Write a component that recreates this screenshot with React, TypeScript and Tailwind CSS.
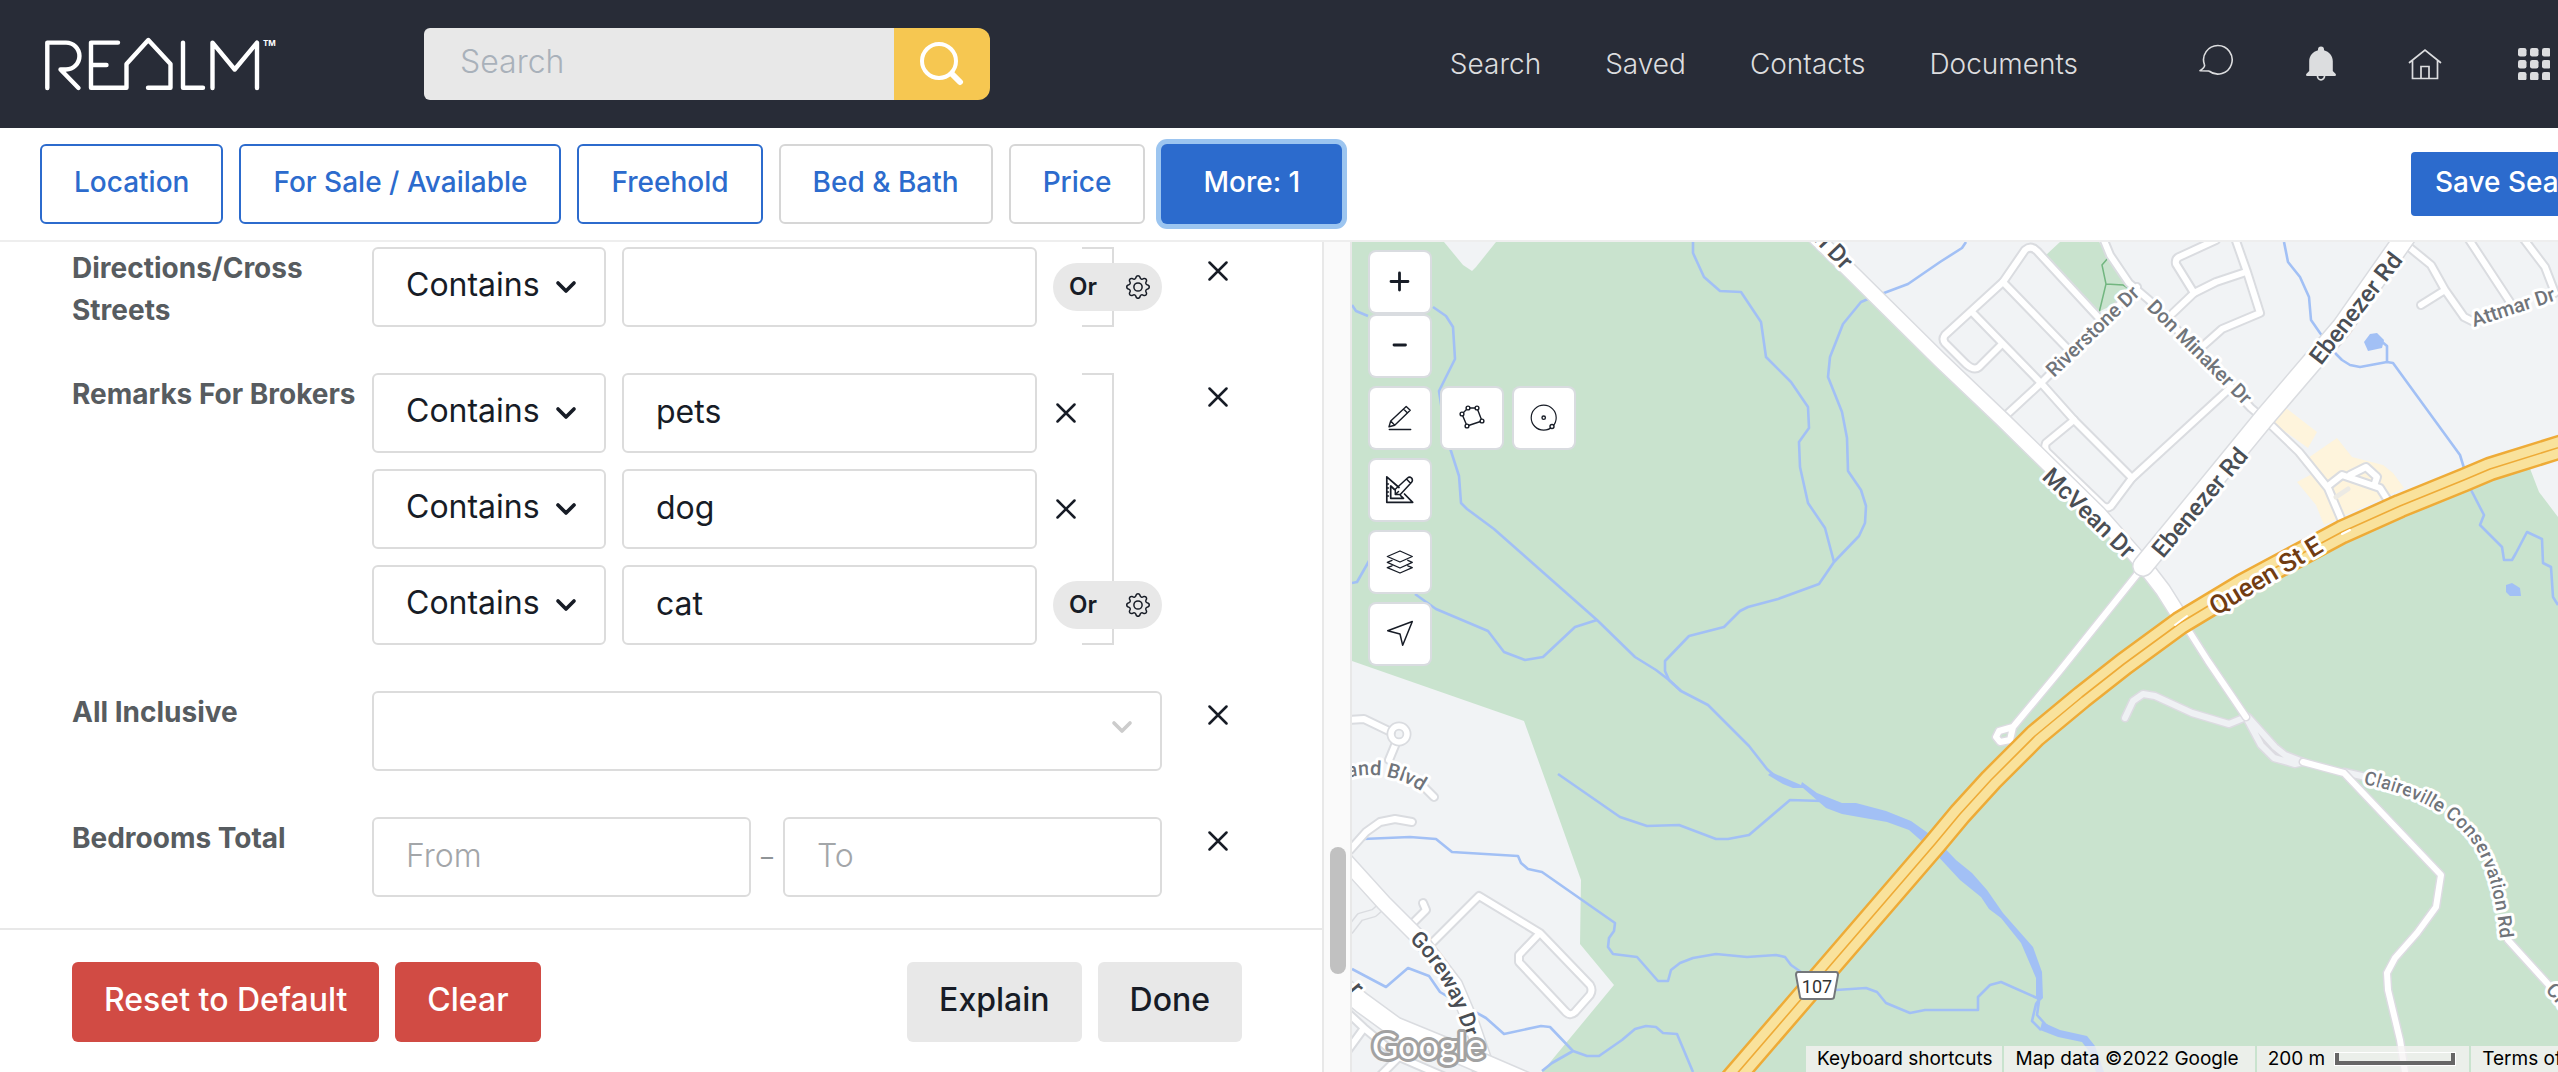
import type { ReactNode } from "react";
import { ChevronDown } from "lucide-react";
import { BsGear } from "react-icons/bs";

/* ---------- Header ---------- */

function Logo() {
  return (
    <svg viewBox="44 36 240 56" className="h-14 w-60 shrink-0" role="img" aria-label="REALM">
      <g fill="none" stroke="#fff" strokeWidth="4.4" strokeLinecap="round" strokeLinejoin="round">
        <path d="M47.3 88V42.6H66A13.4 13.4 0 0 1 66 69.5H60.5L78.5 88" />
        <path d="M118 42.6H91V87.7H126.5V64L148.3 40L170.5 64V87.7H148M91 65H106.5" />
        <path d="M183 42.6V87.7H203" />
        <path d="M212.5 88V42.6L234.7 69.5L257 42.6V88" />
      </g>
      <text x="263" y="46" fill="#fff" className="font-['Inter'] text-[8px] font-bold">
        TM
      </text>
    </svg>
  );
}

function ChatIcon() {
  return (
    <svg viewBox="0 0 36 40" className="h-10 w-9" fill="none" stroke="#dcdddf" strokeWidth="1.6" strokeLinejoin="round">
      <path d="M11 27L2 26.7Q7.5 23 6.4 20.6A14.3 14.3 0 1 1 11 27" />
    </svg>
  );
}

function BellIcon() {
  return (
    <svg viewBox="0 0 30 36" className="h-9 w-[30px]" fill="#dcdddf">
      <path d="M15 .5a3 3 0 0 1 3 3v.7c5.200 1.500 8.800 5.500 8.800 11V25l2.700 2.700c.9 1 .3 2.300-.8 2.300H1.300C.2 30-.4 28.700.5 27.700L3.200 25v-9.800c0-5.500 3.600-9.500 8.800-11v-.7a3 3 0 0 1 3-3z" />
      <path d="M11.500 30a3.500 3.800 0 0 0 7 0" fill="none" stroke="#dcdddf" strokeWidth="1.700" />
    </svg>
  );
}

function HouseIcon() {
  return (
    <svg viewBox="0 0 34 32" className="h-8 w-[34px]" fill="none" stroke="#dcdddf" strokeWidth="1.7" strokeLinecap="round">
      <path d="M1.500 14.500L17 2L32.500 14.500M4.500 12.500V30.500H29.500V12.500M13 30.500V18.500H21V30.500" />
    </svg>
  );
}

function GridIcon() {
  const steps = [0, 12, 24];
  return (
    <svg viewBox="0 0 32 32" className="size-8" fill="#dcdddf">
      {steps.map((y) => steps.map((x) => <rect key={`${x}-${y}`} x={x} y={y} width="8.500" height="8.500" rx="2.200" />))}
    </svg>
  );
}

function Header() {
  return (
    <header className="flex h-32 shrink-0 items-center bg-[#282c37] pr-2 pl-11 text-[#dcdddf]">
      <Logo />
      <form className="ml-[140px] flex h-[72px] w-[566px]" onSubmit={(e) => e.preventDefault()}>
        <input
          type="search"
          aria-label="Search"
          placeholder="Search"
          className="min-w-0 flex-1 rounded-l-md bg-[#e8e8e8] pb-1 pl-9 text-[32px] font-light text-gray-900 outline-none placeholder:text-[#a9b1ba]"
        />
        <button type="submit" aria-label="Run search" className="flex w-24 items-center justify-center rounded-r-xl bg-[#f6c751]">
          <svg viewBox="0 0 44 44" className="size-11" fill="none" stroke="#fff" strokeLinecap="round">
            <circle cx="19" cy="19" r="17" strokeWidth="4" />
            <path d="M32 32L40 40" strokeWidth="6" />
          </svg>
        </button>
      </form>
      <nav className="ml-auto flex items-center gap-16 text-[28px] font-light">
        <a href="#search">Search</a>
        <a href="#saved">Saved</a>
        <a href="#contacts">Contacts</a>
        <a href="#documents">Documents</a>
      </nav>
      <div className="ml-[120px] flex items-center gap-[72px]">
        <button type="button" aria-label="Messages"><ChatIcon /></button>
        <button type="button" aria-label="Notifications"><BellIcon /></button>
        <button type="button" aria-label="Home"><HouseIcon /></button>
        <button type="button" aria-label="Apps" className="ml-1"><GridIcon /></button>
      </div>
    </header>
  );
}

/* ---------- Filter bar ---------- */

function FilterBar() {
  const base = "h-20 rounded-md border-2 bg-white px-8 pb-1 text-[28px] font-medium whitespace-nowrap text-[#2c6bcd]";
  return (
    <div className="flex h-[114px] shrink-0 items-center border-b-2 border-[#eeeeee] bg-white pl-10">
      <div className="flex gap-4">
        <button type="button" className={`${base} border-[#2c6bcd]`}>Location</button>
        <button type="button" className={`${base} border-[#2c6bcd]`}>For Sale / Available</button>
        <button type="button" className={`${base} border-[#2c6bcd]`}>Freehold</button>
        <button type="button" className={`${base} border-[#d6d6d6]`}>Bed &amp; Bath</button>
        <button type="button" className={`${base} border-[#d6d6d6]`}>Price</button>
        <button
          type="button"
          className="h-20 rounded-md bg-[#2c6bcd] px-[42px] pb-1 text-[28px] font-medium whitespace-nowrap text-white ring-5 ring-[#9cc5f0]"
        >
          More: 1
        </button>
      </div>
      <button
        type="button"
        className="-mr-[68px] ml-auto h-16 shrink-0 rounded-sm bg-[#2c6bcd] px-6 pb-1 text-[28px] font-medium whitespace-nowrap text-white"
      >
        Save Search
      </button>
    </div>
  );
}

/* ---------- Filter panel ---------- */

function Cross() {
  return (
    <svg viewBox="0 0 20 20" className="size-5" fill="none" stroke="#171c26" strokeWidth="2.500" strokeLinecap="round">
      <path d="M1.500 1.500L18.500 18.500M18.500 1.500L1.500 18.500" />
    </svg>
  );
}

function Row({ label, htmlFor, children }: { label: string; htmlFor: string; children: ReactNode }) {
  return (
    <div className="flex items-start">
      <label htmlFor={htmlFor} className="-mb-1 w-[300px] shrink-0 text-[28px] leading-[42px] font-bold text-[#575c60]">
        {label}
      </label>
      <div className="relative min-w-0 flex-1">{children}</div>
      <button type="button" aria-label={`Remove ${label}`} className="ml-8 flex size-12 items-center justify-center">
        <Cross />
      </button>
    </div>
  );
}

const box = "h-20 rounded-md border-2 border-[#dcdcdc] bg-white pb-1 pl-8 text-[32px] text-[#171c26] outline-none";

function TermList({ id, name, terms }: { id: string; name: string; terms: string[] }) {
  return (
    <div className="flex flex-col gap-4">
      <div className="absolute inset-y-0 right-12 w-8 border-2 border-l-0 border-[#dcdcdc]" />
      {terms.map((term, i) => (
        <div key={i} className="flex items-center gap-4">
          <div className="relative w-[234px]">
            <select aria-label={`${name} operator ${i + 1}`} className={`${box} w-full appearance-none`}>
              <option>Contains</option>
            </select>
            <ChevronDown className="pointer-events-none absolute top-6 right-6 size-8 text-[#171c26]" strokeWidth={2.75} />
          </div>
          <input
            id={i === 0 ? id : undefined}
            aria-label={`${name} term ${i + 1}`}
            defaultValue={term}
            className={`${box} min-w-0 flex-1`}
          />
          <div className="relative flex w-[109px]">
            {i < terms.length - 1 ? (
              <button type="button" aria-label="Remove term" className="flex h-12 w-[26px] items-center justify-center">
                <Cross />
              </button>
            ) : (
              <button
                type="button"
                className="flex h-12 w-full items-center justify-between rounded-full bg-[#e8e8e8] pr-3 pl-4 text-[24px] font-semibold text-[#171c26]"
              >
                Or
                <BsGear className="size-6" />
              </button>
            )}
          </div>
        </div>
      ))}
    </div>
  );
}

function Panel() {
  return (
    <div className="flex min-h-0 min-w-0">
      <div className="flex min-w-0 flex-1 flex-col bg-white">
        <div className="flex min-h-0 flex-1 flex-col gap-[46px] overflow-hidden pt-[5px] pr-20 pl-[72px]">
          <Row label="Directions/Cross Streets" htmlFor="directions">
            <TermList id="directions" name="Directions" terms={[""]} />
          </Row>
          <Row label="Remarks For Brokers" htmlFor="remarks">
            <TermList id="remarks" name="Remarks" terms={["pets", "dog", "cat"]} />
          </Row>
          <Row label="All Inclusive" htmlFor="inclusive">
            <select id="inclusive" className={`${box} block w-full appearance-none`}>
              <option></option>
            </select>
            <ChevronDown className="pointer-events-none absolute top-5 right-6 size-8 text-[#cccccc]" strokeWidth={2.75} />
          </Row>
          <Row label="Bedrooms Total" htmlFor="beds-from">
            <div className="flex items-center">
              <input id="beds-from" placeholder="From" className={`${box} min-w-0 flex-1 font-light placeholder:text-[#a3a6a9]`} />
              <span className="w-8 text-center text-[24px] text-[#8f9497]">–</span>
              <input aria-label="Bedrooms to" placeholder="To" className={`${box} min-w-0 flex-1 font-light placeholder:text-[#a3a6a9]`} />
            </div>
          </Row>
        </div>
        <div className="flex h-36 shrink-0 gap-4 border-t-2 border-[#e8e8e8] pt-8 pr-20 pl-[72px] text-[32px] font-medium whitespace-nowrap">
          <button type="button" className="h-20 rounded-md bg-[#d14b44] px-8 pb-1 text-white">Reset to Default</button>
          <button type="button" className="h-20 rounded-md bg-[#d14b44] px-8 pb-1 text-white">Clear</button>
          <button type="button" className="ml-auto h-20 rounded-md bg-[#e8e8e8] px-8 pb-1 text-[#171c26]">Explain</button>
          <button type="button" className="h-20 rounded-md bg-[#e8e8e8] px-8 pb-1 text-[#171c26]">Done</button>
        </div>
      </div>
      <div className="relative w-[30px] shrink-0 border-x-2 border-[#e8e8e8] bg-[#fafafa]">
        <div className="absolute right-1 bottom-[98px] h-[127px] w-4 rounded-full bg-[#c1c1c1]" />
      </div>
    </div>
  );
}

/* ---------- Map ---------- */

const streams = [
  "M1352 305L1356 311L1368 316M1433 307L1446 316L1453 327L1455 359L1439 391L1445 430L1450 448L1459 476L1461 503L1467 509L1494 529L1597 620L1635 657L1656 670L1669 680L1681 691L1708 705L1749 746L1767 769L1775 776",
  "M1693 242V253L1704 277L1720 291L1741 292L1761 322L1766 357L1791 382L1808 407L1809 428L1799 442L1800 467L1808 503L1825 528L1834 562",
  "M1966 242L1962 248L1940 262L1908 284L1884 293L1868 299L1861 302L1843 324L1830 357L1828 377L1842 412L1847 438L1848 471L1861 490L1866 506L1865 523L1859 536L1834 562L1819 584L1778 599L1748 607L1740 611L1724 627L1689 636L1665 661V671L1669 680L1681 691",
  "M1369 561L1357 582L1352 583",
  "M1415 594L1436 609L1488 631L1504 652L1525 660L1543 657L1575 627L1597 620",
  "M1558 774L1620 817L1647 826L1679 825L1716 839L1728 839L1749 835L1790 800L1822 801",
  "M1363 839L1410 837L1436 839L1452 852L1518 856L1521 863L1528 869L1542 872L1615 923L1614 931L1609 938L1608 947L1613 954L1637 957L1658 981H1668L1671 970L1680 963L1693 958L1716 954L1747 957L1776 955L1785 957L1791 965L1801 972L1815 985L1836 990L1866 988L1877 992L1886 1003L1910 1013L1925 1010H1978V997L1990 985L2001 982L2037 998",
  "M1352 969L1386 987L1408 968L1429 976L1440 992L1455 1001L1486 1018L1504 1034L1541 1026L1550 1027L1573 1051L1587 1056H1599L1622 1040L1635 1029L1646 1026L1656 1027L1663 1033L1677 1034L1693 1072M1573 1051L1552 1063L1542 1071",
  "M2284 242L2288 262L2300 277L2309 297L2311 320L2320 333L2336 354L2342 360L2350 365L2360 367L2387 362L2393 363L2460 455L2464 468L2470 488L2484 515L2480 525L2502 547L2504 560H2512L2516 553L2527 532L2542 539L2543 563L2551 567L2553 597L2558 605",
  "M2387 362V346L2381 341",
  "M2038 1001L2036 1004L2032 1021L2041 1030M2039 1001L2037 1015L2046 1025L2058 1033",
];

const water = [
  "M1771 772L1801 785L1802 782L1817 793L1842 803H1856L1886 811L1911 821L1935 838L1956 860L1972 873L1987 890L2003 913L2033 947L2042 972L2043 998L2038 1003L2036 997V978L2021 943L2001 918L1989 909L1981 897L1960 880L1934 852L1909 830L1887 822L1842 814L1826 808L1803 788H1793L1783 784L1768 775Z",
  "M2042 1022L2060 1030L2087 1036L2095 1046L2104 1072H2096L2088 1050L2082 1042L2058 1037L2040 1030Z",
  "M2370 334L2377 333L2384 340L2382 348L2368 351L2364 342Z",
  "M2506 585L2512 583L2520 588L2521 596L2510 596L2506 592Z",
];

const minorRoads = [
  "M2002 419L2041 383L2137 287",
  "M1972 312L2041 383L2074 420L2132 478",
  "M2098 317L2037 251Q2031 245 2025 250L2003 282L1945 335Q1942 339 1945 343L1966 364Q1974 371 1979 367L2001 345",
  "M2003 282L2066 347",
  "M2074 420L2046 443Q2044 448 2047 452L2103 506Q2107 509 2111 506L2132 478L2228 390",
  "M2103 238L2110 255L2129 283L2149 300L2251 408L2263 418L2271 425L2299 452L2328 488L2342 521",
  "M2216 240L2179 257Q2175 259 2176 264L2194 293",
  "M2246 272L2216 282L2194 293L2173 313",
  "M2235 238L2247 272L2260 313L2222 329L2204 345",
  "M2409 247L2431 265L2445 290L2464 317L2474 322M2445 290L2421 305",
  "M2468 238L2510 302M2523 238L2545 267L2555 293",
  "M2328 486L2342 475L2380 488L2387 499M2350 475L2366 467L2377 477L2374 486",
  "M1348 720L1364 719L1391 732M1396 743L1389 760M1420 783L1434 797",
  "M1412 822L1395 819L1380 822L1366 832L1350 850",
  "M1423 903L1426 910L1413 923",
  "M1433 942L1479 896L1540 933L1590 985Q1593 990 1590 995L1575 1012Q1570 1017 1565 1011L1519 962V955L1538 935",
  "M1348 1013L1364 1028L1399 1057L1380 1076M1348 1050L1364 1028M1399 1057L1443 1076M1475 1076L1480 1066",
];

const parkRoads = [
  "M2143 567L2058 673L2013 727L1999 731L1996 737L2000 742L2010 740L2013 727",
  "M2180 617L2208 661L2246 717",
  "M2303 762L2344 773L2441 875L2436 907L2417 933L2395 958L2387 973L2388 990L2400 1040L2405 1072",
  "M2508 940L2547 983L2562 1000",
];

const trails = [
  "M2125 718L2133 701L2143 694L2155 696L2192 713L2229 724L2246 717",
  "M2246 717L2261 745L2274 758L2295 764L2303 762L2285 755L2275 747L2248 717",
  "M2344 772L2366 777",
];

const mcVean = "M1804 226L1842 263L1940 360L2003 420L2098 513L2143 564L2163 590L2180 617";
const ebenezer = "M2410 230L2342 327L2265 417L2143 566";
const goreway = "M1345 860L1384 903L1419 938L1455 985L1472 1025L1484 1060";
const countyRoad = "M1340 985L1362 1003L1395 1027L1451 1050L1530 1084";
const queen =
  "M2570 444L2490 469L2464 480L2400 506L2342 532L2243 585L2180 623L2124 664L2082 697L2035 736L1991 780L1960 814L1935 844L1728 1084";

function Roads({ paths, casing, fill, edge = "#dadce0", color = "#fff" }: {
  paths: string[];
  casing: number;
  fill: number;
  edge?: string;
  color?: string;
}) {
  return (
    <>
      {paths.map((d) => <path key={d} d={d} stroke={edge} strokeWidth={casing} />)}
      {paths.map((d) => <path key={d} d={d} stroke={color} strokeWidth={fill} />)}
    </>
  );
}

function MapCanvas() {
  return (
    <svg viewBox="1352 242 1206 830" preserveAspectRatio="xMinYMin slice" className="absolute inset-0 size-full" aria-hidden="true">
      <defs>
        <path id="claireville" d="M2363 784Q2443 800 2474 845Q2497 880 2502 960" />
        <path id="goreway" d="M1409 940Q1457 985 1473 1070" />
        <path id="blvd" d="M1348 778Q1392 766 1434 801" />
      </defs>
      <rect x="1352" y="242" width="1206" height="830" fill="#c9e3ce" />
      <g fill="#f1f3f5">
        <path d="M1444 242L1463 265L1472 271L1476 267L1496 242Z" />
        <path d="M1352 661L1524 721L1550 793L1581 880L1580 944L1614 985L1542 1072H1352Z" />
        <path d="M1814 242L1940 360L2143 567L2180 620L2342 532L2490 470L2529 466L2539 492L2558 517V242Z" />
      </g>
      <path d="M2060 242L2046 255L2098 312L2113 305L2133 285L2110 258L2099 242Z" fill="#c9e3ce" />
      <path d="M2108 258L2102 265L2106 284L2099 313M2106 284L2123 285L2129 289" fill="none" stroke="#72b680" strokeWidth="1.500" />
      <g fill="#fef4dc">
        <path d="M2286 408L2317 432L2308 448L2273 423Z" />
        <path d="M2337 438L2352 457L2383 465L2393 473L2404 488L2324 525L2316 505L2297 482L2312 474L2308 458Z" />
      </g>
      <g fill="none" stroke="#a2c0f5" strokeWidth="2.600" strokeLinejoin="round">
        {streams.map((d) => <path key={d} d={d} />)}
      </g>
      <g fill="#a2c0f5">{water.map((d) => <path key={d} d={d} />)}</g>

      <g fill="none" strokeLinejoin="round" strokeLinecap="round">
        <path d="M1350 930L1360 917L1374 913L1383 905" stroke="#dadce0" strokeWidth="9" />
        <path d="M1350 930L1360 917L1374 913L1383 905" stroke="#f1f3f5" strokeWidth="6" />
        <Roads paths={trails} casing={9} fill={6} color="#eff1f4" edge="#dcdbe1" />
        <Roads paths={minorRoads} casing={10} fill={6} />
        <circle cx="1399" cy="734" r="8" stroke="#dadce0" strokeWidth="9" />
        <circle cx="1399" cy="734" r="8" stroke="#fff" strokeWidth="5.500" />
        <path d="M2336 497L2348 489" stroke="#eceae4" strokeWidth="5" />
        <Roads paths={parkRoads} casing={9} fill={6} edge="#dcdbe1" />
        <Roads paths={[mcVean, goreway]} casing={17} fill={14} />
        <Roads paths={[ebenezer, countyRoad]} casing={22} fill={19} />
        <Roads paths={[queen]} casing={25} fill={20} edge="#eeab37" color="#f9e29c" />
        <path d={queen} stroke="#eeab37" strokeWidth="1.600" />
        <path d="M2175 625L2187 616M2342 534L2350 530" stroke="#fff" strokeWidth="2" />
      </g>

      <path d="M1798 972H1836Q1838 972 1838 975L1834 997Q1834 999 1831 999H1803Q1800 999 1800 997L1796 975Q1796 972 1798 972Z" fill="#fff" stroke="#73767a" strokeWidth="2" />

      <g className="font-['Roboto'] font-medium" strokeLinejoin="round" paintOrder="stroke" stroke="#fff" strokeWidth="6">
        <g fill="#4a4e54" className="text-[24px]">
          <text x="1843" y="271" textAnchor="end" transform="rotate(46 1843 271)">McVean Dr</text>
          <text x="2041" y="478" transform="rotate(44 2041 478)">McVean Dr</text>
          <text x="2163" y="559" transform="rotate(-50 2163 559)">Ebenezer Rd</text>
          <text x="2321" y="366" transform="rotate(-52 2321 366)">Ebenezer Rd</text>
          <text className="text-[22px]"><textPath href="#goreway">Goreway Dr</textPath></text>
          <text x="1348" y="990" transform="rotate(50 1348 990)">r</text>
        </g>
        <g fill="#70747a" className="text-[20px]">
          <text x="2054" y="378" transform="rotate(-44 2054 378)">Riverstone Dr</text>
          <text x="2146" y="308" transform="rotate(45 2146 308)">Don Minaker Dr</text>
          <text x="2474" y="327" transform="rotate(-18 2474 327)">Attmar Dr</text>
          <text x="2545" y="990" transform="rotate(50 2545 990)">Claireville</text>
          <text className="text-[19px]"><textPath href="#claireville">Claireville Conservation Rd</textPath></text>
          <text><textPath href="#blvd">and Blvd</textPath></text>
        </g>
        <text x="2216" y="616" transform="rotate(-31 2216 616)" fill="#713c12" className="text-[26px]">Queen St E</text>
      </g>
      <text x="1817" y="993" textAnchor="middle" fill="#333" className="font-['Roboto'] text-[18px]">107</text>
    </svg>
  );
}

function ToolButton({ label, children }: { label: string; children: ReactNode }) {
  return (
    <button type="button" aria-label={label} className="size-[60px] rounded-md bg-white ring-2 ring-[#d9dce0]">
      <svg viewBox="0 0 60 60" className="size-full" fill="none" stroke="#171c26" strokeWidth="1.400" strokeLinecap="round" strokeLinejoin="round">
        {children}
      </svg>
    </button>
  );
}

const nodes = [
  [20, 26],
  [26, 20],
  [35, 20],
  [40, 33],
  [25, 38],
];

function MapTools() {
  return (
    <div className="absolute top-[10px] left-[18px] flex flex-col gap-3">
      <div className="flex flex-col gap-1">
        <ToolButton label="Zoom in"><path d="M21 29.500H38M29.500 21V38" strokeWidth="2.800" /></ToolButton>
        <ToolButton label="Zoom out"><path d="M24 29H35.500" strokeWidth="2.800" /></ToolButton>
      </div>
      <div className="flex gap-3">
        <ToolButton label="Draw">
          <path d="M19 38.700L20.700 33L36.200 18.500L40.200 22.300L24.700 37.200ZM33.500 21L37.500 25M19.300 41.500H40.700M20.700 33L24.700 37.200" />
        </ToolButton>
        <ToolButton label="Draw polygon">
          <path d="M20 26L26 20H35L40 33L25 38Z" />
          {nodes.map(([x, y]) => <circle key={x} cx={x} cy={y} r="1.900" fill="#fff" />)}
        </ToolButton>
        <ToolButton label="Draw circle">
          <circle cx="29.700" cy="29.700" r="12.500" strokeWidth="1.200" />
          <circle cx="29.700" cy="29.700" r="1.700" />
          <circle cx="38" cy="38.500" r="2" fill="#fff" />
        </ToolButton>
      </div>
      <ToolButton label="Measure">
        <path d="M29 27.500L16.800 16.800V42.300H42.700L34.500 34M24.500 29.500L20.700 26V38.300H33.500L30.500 35.500" strokeWidth="1.700" />
        <path d="M25.300 34.500V29.300L37.500 18Q39.500 16.300 41.600 18Q43.300 20.200 41.600 22.200L30.300 34.500ZM36.500 19L40.500 23.200M25.300 34.500L28.500 31.500" strokeWidth="1.500" />
        <path d="M17 24H18.500M17 28H18.500M17 32H18.500M17 36H18.500" />
      </ToolButton>
      <ToolButton label="Layers">
        <path d="M17.300 24.500L30 19L42.300 24.500L30 30ZM22 28.300L17.300 30.300L30 36L42.300 30.300L37.800 28.300M22 33.800L17.300 35.700L30 41L42.300 35.700L37.800 33.800" strokeWidth="1.300" />
      </ToolButton>
      <ToolButton label="My location">
        <path d="M17.700 26.700L42.300 17.500L32.700 41.300L30 30Z" strokeWidth="1.500" />
      </ToolButton>
    </div>
  );
}

function MapFooter() {
  const cell = "flex h-[26px] items-center bg-[#f5f3f3]/75 pl-[11px] whitespace-nowrap";
  return (
    <div className="absolute bottom-0 left-[454px] flex gap-[2px] font-['Inter'] text-[19px] text-black">
      <button type="button" className={`${cell} pr-[10px]`}>Keyboard shortcuts</button>
      <span className={`${cell} pr-4`}>Map data ©2022 Google</span>
      <button type="button" className={`${cell} gap-[10px] pr-[14px]`}>
        200 m
        <span className="h-3 w-[120px] border-4 border-t-0 border-[#666666] outline-1 outline-white" />
      </button>
      <a href="#terms" className={`${cell} pr-3`}>Terms of Use</a>
    </div>
  );
}

function MapView() {
  return (
    <div className="relative min-w-0 overflow-hidden bg-[#c9e3ce]">
      <MapCanvas />
      <MapTools />
      <svg viewBox="0 0 128 48" className="absolute bottom-0 left-[14px] h-12 w-32" role="img" aria-label="Google">
        <text x="6" y="35" fill="#fff" stroke="#a2a2a2" strokeWidth="6" strokeLinejoin="round" paintOrder="stroke" className="font-['Lato'] text-[36px]">
          Google
        </text>
      </svg>
      <MapFooter />
    </div>
  );
}

export default function App() {
  return (
    <div className="flex h-screen min-h-[900px] flex-col overflow-hidden bg-white font-['Inter',sans-serif]">
      <Header />
      <FilterBar />
      <main className="grid min-h-0 flex-1 grid-cols-[1352fr_1206fr]">
        <Panel />
        <MapView />
      </main>
    </div>
  );
}
